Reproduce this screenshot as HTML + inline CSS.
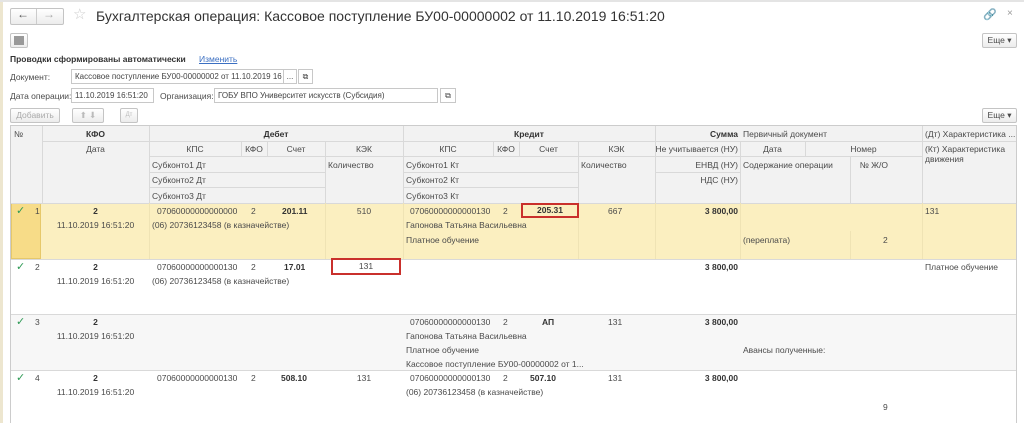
<!DOCTYPE html>
<html><head><meta charset="utf-8">
<style>
*{margin:0;padding:0;box-sizing:border-box}
body{width:1024px;height:423px;overflow:hidden;background:#fff;font-family:"Liberation Sans","DejaVu Sans",sans-serif;color:#4a4a4a;position:relative;font-size:8.5px}
div,span{position:absolute;white-space:nowrap}
.b{font-weight:bold;color:#333}
.r{text-align:right}
.c{text-align:center}
.f{border:1px solid #c8c8c8;background:#fff;height:15px;line-height:13px;padding-left:3px;color:#444;font-size:8px;overflow:hidden}
.btn{border:1px solid #c4c4c4;border-radius:2px;background:linear-gradient(#fff,#ececec);height:15px;line-height:13px;font-size:8.5px}
.hl{background:#d9d9d9;height:1px}
.vl{background:#d9d9d9;width:1px}
.ck{color:#2e9a55;font-size:11px;font-weight:bold}
</style></head><body>
<div style="left:0;top:0;width:3px;height:423px;background:#ede6cf"></div>
<div style="left:0;top:0;width:1024px;height:2px;background:#e4e4e4"></div>
<!-- nav -->
<div class="btn" style="left:10px;top:8px;width:54px;height:17px"></div>
<div style="left:36px;top:9px;width:1px;height:15px;background:#ccc"></div>
<div style="left:17px;top:7px;font-size:12px;color:#555">&#8592;</div>
<div style="left:43px;top:7px;font-size:12px;color:#aaa">&#8594;</div>
<div style="left:73px;top:5px;font-size:15px;color:#ccc">&#9734;</div>
<div style="left:96px;top:8px;font-size:14px;color:#333">Бухгалтерская операция: Кассовое поступление БУ00-00000002 от 11.10.2019 16:51:20</div>
<div style="left:983px;top:8px;font-size:11px;color:#bbb">&#128279;</div>
<div style="left:1007px;top:8px;font-size:10px;color:#999">×</div>
<div class="btn" style="left:10px;top:33px;width:18px;height:15px"></div>
<div style="left:14px;top:36px;width:10px;height:9px;background:#999"></div>
<div class="btn" style="left:982px;top:33px;width:35px;text-align:center">Еще ▾</div>
<div class="b" style="left:10px;top:54px;font-size:8.5px">Проводки сформированы автоматически</div>
<div style="left:199px;top:54px;color:#3b6fc2;text-decoration:underline">Изменить</div>
<div style="left:10px;top:72px">Документ:</div>
<div class="f" style="left:71px;top:69px;width:213px">Кассовое поступление БУ00-00000002 от 11.10.2019 16</div>
<div class="f" style="left:283px;top:69px;width:14px;padding:0;text-align:center">...</div>
<div class="f" style="left:298px;top:69px;width:15px;padding:0;text-align:center">⧉</div>
<div style="left:10px;top:91px">Дата операции:</div>
<div class="f" style="left:71px;top:88px;width:83px">11.10.2019 16:51:20</div>
<div style="left:160px;top:91px">Организация:</div>
<div class="f" style="left:214px;top:88px;width:224px">ГОБУ ВПО Университет искусств (Субсидия)</div>
<div class="f" style="left:440px;top:88px;width:16px;padding:0;text-align:center">⧉</div>
<div class="btn" style="left:10px;top:108px;width:50px;text-align:center;color:#aaa">Добавить</div>
<div class="btn" style="left:72px;top:108px;width:32px;color:#bbb;text-align:center">⬆ ⬇</div>
<div class="btn" style="left:120px;top:108px;width:18px;color:#bbb;font-size:6px;text-align:center">Дт<br></div>
<div class="btn" style="left:982px;top:108px;width:35px;text-align:center">Еще ▾</div>
<!-- table -->
<div style="left:10px;top:125px;width:1007px;height:298px;border:1px solid #ccc;border-bottom:none"></div>
<div style="left:11px;top:126px;width:1005px;height:77px;background:#f2f2f2"></div>
<div style="left:11px;top:203px;width:1005px;height:56px;background:#fbefc0"></div>
<div style="left:11px;top:203px;width:30px;height:56px;background:#f7dc88;border:1px solid #e6c86a"></div>
<div style="left:11px;top:314px;width:1005px;height:56px;background:#f7f7f7"></div>
<!-- header grid -->
<div class="hl" style="left:42px;top:141px;width:974px"></div>
<div class="hl" style="left:149px;top:156px;width:254px"></div><div class="hl" style="left:403px;top:156px;width:519px"></div>
<div class="hl" style="left:149px;top:172px;width:176px"></div><div class="hl" style="left:403px;top:172px;width:175px"></div><div class="hl" style="left:655px;top:172px;width:85px"></div>
<div class="hl" style="left:149px;top:187px;width:176px"></div><div class="hl" style="left:403px;top:187px;width:175px"></div>
<div class="hl" style="left:11px;top:203px;width:1005px"></div>
<div class="hl" style="left:11px;top:259px;width:1005px"></div>
<div class="hl" style="left:11px;top:314px;width:1005px"></div>
<div class="hl" style="left:11px;top:370px;width:1005px"></div>
<div class="vl" style="left:42px;top:126px;height:77px"></div>
<div class="vl" style="left:149px;top:126px;height:77px"></div>
<div class="vl" style="left:403px;top:126px;height:77px"></div>
<div class="vl" style="left:655px;top:126px;height:77px"></div>
<div class="vl" style="left:740px;top:141px;height:62px"></div>
<div class="vl" style="left:922px;top:126px;height:77px"></div>
<div class="vl" style="left:241px;top:141px;height:15px"></div><div class="vl" style="left:267px;top:141px;height:15px"></div>
<div class="vl" style="left:325px;top:141px;height:62px"></div>
<div class="vl" style="left:493px;top:141px;height:15px"></div><div class="vl" style="left:519px;top:141px;height:15px"></div>
<div class="vl" style="left:578px;top:141px;height:62px"></div>
<div class="vl" style="left:805px;top:141px;height:15px"></div>
<div class="vl" style="left:850px;top:156px;height:47px"></div>
<!-- yellow row internal grid -->
<div class="vl" style="left:149px;top:203px;height:56px;background:#efe3b4"></div>
<div class="vl" style="left:325px;top:203px;height:56px;background:#efe3b4"></div>
<div class="vl" style="left:403px;top:203px;height:56px;background:#efe3b4"></div>
<div class="vl" style="left:578px;top:203px;height:56px;background:#efe3b4"></div>
<div class="vl" style="left:655px;top:203px;height:56px;background:#efe3b4"></div>
<div class="vl" style="left:740px;top:203px;height:56px;background:#efe3b4"></div>
<div class="vl" style="left:850px;top:231px;height:28px;background:#efe3b4"></div>
<div class="vl" style="left:922px;top:203px;height:56px;background:#efe3b4"></div>
<!-- header text -->
<div style="left:14px;top:129px">№</div>
<div class="b c" style="left:42px;top:129px;width:107px">КФО</div>
<div class="b c" style="left:149px;top:129px;width:254px">Дебет</div>
<div class="b c" style="left:403px;top:129px;width:252px">Кредит</div>
<div class="b r" style="left:655px;top:129px;width:83px">Сумма</div>
<div style="left:743px;top:129px">Первичный документ</div>
<div style="left:925px;top:129px">(Дт) Характеристика ...</div>
<div class="c" style="left:42px;top:144px;width:107px">Дата</div>
<div class="c" style="left:149px;top:144px;width:92px">КПС</div>
<div class="c" style="left:241px;top:144px;width:26px">КФО</div>
<div class="c" style="left:267px;top:144px;width:58px">Счет</div>
<div class="c" style="left:325px;top:144px;width:78px">КЭК</div>
<div class="c" style="left:403px;top:144px;width:90px">КПС</div>
<div class="c" style="left:493px;top:144px;width:26px">КФО</div>
<div class="c" style="left:519px;top:144px;width:59px">Счет</div>
<div class="c" style="left:578px;top:144px;width:77px">КЭК</div>
<div class="r" style="left:655px;top:144px;width:83px">Не учитывается (НУ)</div>
<div class="c" style="left:740px;top:144px;width:65px">Дата</div>
<div class="c" style="left:805px;top:144px;width:117px">Номер</div>
<div style="left:925px;top:144px;line-height:10px">(Кт) Характеристика<br>движения</div>
<div style="left:152px;top:160px">Субконто1 Дт</div><div style="left:152px;top:175px">Субконто2 Дт</div><div style="left:152px;top:191px">Субконто3 Дт</div>
<div style="left:328px;top:160px">Количество</div>
<div style="left:406px;top:160px">Субконто1 Кт</div><div style="left:406px;top:175px">Субконто2 Кт</div><div style="left:406px;top:191px">Субконто3 Кт</div>
<div style="left:581px;top:160px">Количество</div>
<div class="r" style="left:655px;top:160px;width:83px">ЕНВД (НУ)</div>
<div class="r" style="left:655px;top:175px;width:83px">НДС (НУ)</div>
<div style="left:743px;top:160px">Содержание операции</div>
<div class="r" style="left:850px;top:160px;width:38px">№ Ж/О</div>
<!-- rows -->
<div class="ck" style="left:16px;top:204px">✓</div><div style="left:35px;top:206px">1</div>
<div class="ck" style="left:16px;top:260px">✓</div><div style="left:35px;top:262px">2</div>
<div class="ck" style="left:16px;top:315px">✓</div><div style="left:35px;top:317px">3</div>
<div class="ck" style="left:16px;top:371px">✓</div><div style="left:35px;top:373px">4</div>
<!-- row1 -->
<div class="b c" style="left:42px;top:206px;width:107px">2</div><div class="c" style="left:42px;top:220px;width:107px">11.10.2019 16:51:20</div>
<div style="left:157px;top:206px">07060000000000000</div><div style="left:251px;top:206px">2</div><div class="b" style="left:282px;top:206px">201.11</div>
<div style="left:152px;top:220px">(06) 20736123458 (в казначействе)</div>
<div class="c" style="left:325px;top:206px;width:78px">510</div>
<div style="left:410px;top:206px">07060000000000130</div><div style="left:503px;top:206px">2</div>
<div class="b" style="left:521px;top:203px;width:58px;height:15px;border:2px solid #c9302c;text-align:center;line-height:11px">205.31</div>
<div style="left:406px;top:220px">Гапонова Татьяна Васильевна</div><div style="left:406px;top:235px">Платное обучение</div>
<div style="left:608px;top:206px">667</div>
<div class="b r" style="left:655px;top:206px;width:83px">3 800,00</div>
<div style="left:743px;top:235px">(переплата)</div><div style="left:883px;top:235px">2</div>
<div style="left:925px;top:206px">131</div>
<!-- row2 -->
<div class="b c" style="left:42px;top:262px;width:107px">2</div><div class="c" style="left:42px;top:276px;width:107px">11.10.2019 16:51:20</div>
<div style="left:157px;top:262px">07060000000000130</div><div style="left:251px;top:262px">2</div><div class="b" style="left:284px;top:262px">17.01</div>
<div style="left:152px;top:276px">(06) 20736123458 (в казначействе)</div>
<div class="c" style="left:331px;top:258px;width:70px;height:17px;border:2px solid #c9302c;line-height:13px">131</div>
<div class="b r" style="left:655px;top:262px;width:83px">3 800,00</div>
<div style="left:925px;top:262px">Платное обучение</div>
<!-- row3 -->
<div class="b c" style="left:42px;top:317px;width:107px">2</div><div class="c" style="left:42px;top:331px;width:107px">11.10.2019 16:51:20</div>
<div style="left:410px;top:317px">07060000000000130</div><div style="left:503px;top:317px">2</div><div class="b" style="left:542px;top:317px">АП</div>
<div style="left:406px;top:331px">Гапонова Татьяна Васильевна</div><div style="left:406px;top:345px">Платное обучение</div>
<div style="left:406px;top:359px">Кассовое поступление БУ00-00000002 от 1...</div>
<div style="left:608px;top:317px">131</div>
<div class="b r" style="left:655px;top:317px;width:83px">3 800,00</div>
<div style="left:743px;top:345px">Авансы полученные:</div>
<!-- row4 -->
<div class="b c" style="left:42px;top:373px;width:107px">2</div><div class="c" style="left:42px;top:387px;width:107px">11.10.2019 16:51:20</div>
<div style="left:157px;top:373px">07060000000000130</div><div style="left:251px;top:373px">2</div><div class="b" style="left:281px;top:373px">508.10</div>
<div class="c" style="left:325px;top:373px;width:78px">131</div>
<div style="left:410px;top:373px">07060000000000130</div><div style="left:503px;top:373px">2</div><div class="b" style="left:530px;top:373px">507.10</div>
<div style="left:406px;top:387px">(06) 20736123458 (в казначействе)</div>
<div style="left:608px;top:373px">131</div>
<div class="b r" style="left:655px;top:373px;width:83px">3 800,00</div>
<div style="left:883px;top:402px">9</div>
</body></html>
